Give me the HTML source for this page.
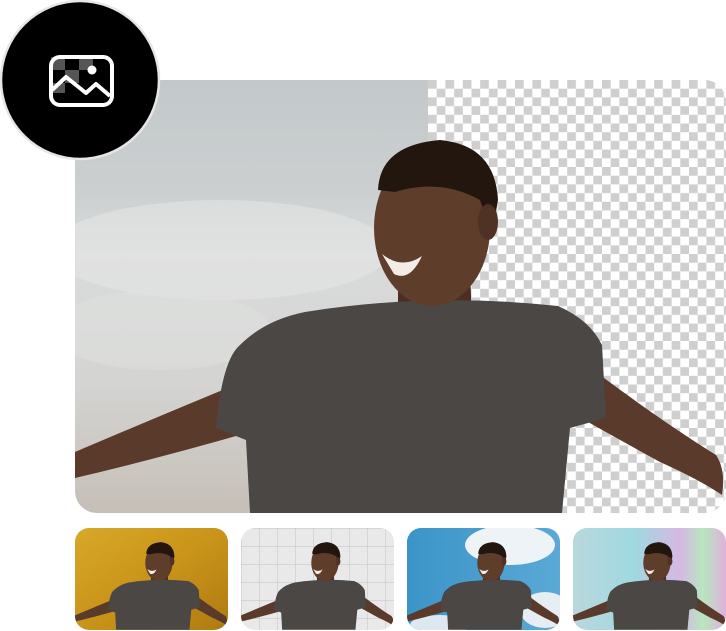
<!DOCTYPE html>
<html><head><style>
html,body{margin:0;padding:0;background:#fff;width:726px;height:631px;overflow:hidden}
svg{display:block}
</style></head><body>
<svg width="726" height="631" viewBox="0 0 726 631" xmlns="http://www.w3.org/2000/svg">
<defs>
<pattern id="chk" x="428" y="80" width="17.4" height="17.4" patternUnits="userSpaceOnUse">
<rect width="17.4" height="17.4" fill="#fff"/>
<rect width="8.7" height="8.7" fill="#cfcfcf"/>
<rect x="8.7" y="8.7" width="8.7" height="8.7" fill="#cfcfcf"/>
</pattern>
<linearGradient id="bg" x1="0" y1="0" x2="0" y2="1">
<stop offset="0" stop-color="#c3c8ca"/>
<stop offset="0.25" stop-color="#cbcfd0"/>
<stop offset="0.4" stop-color="#d9dbdb"/>
<stop offset="0.7" stop-color="#d4d4d2"/>
<stop offset="1" stop-color="#c6bfb7"/>
</linearGradient>
<linearGradient id="gold" x1="0" y1="0" x2="1" y2="1">
<stop offset="0" stop-color="#d8a829"/><stop offset="0.5" stop-color="#c99419"/><stop offset="1" stop-color="#b07a12"/>
</linearGradient>
<linearGradient id="sky" x1="0" y1="0" x2="1" y2="0">
<stop offset="0" stop-color="#3b94c8"/><stop offset="1" stop-color="#5aa9d6"/>
</linearGradient>
<linearGradient id="holo" x1="0" y1="0" x2="1" y2="0">
<stop offset="0" stop-color="#b9d8dc"/><stop offset="0.4" stop-color="#9fd9e0"/><stop offset="0.7" stop-color="#d6b8e4"/><stop offset="0.85" stop-color="#b8e6c0"/><stop offset="1" stop-color="#e0b0dc"/>
</linearGradient>
<pattern id="grid" x="241" y="528" width="18" height="18" patternUnits="userSpaceOnUse">
<rect width="18" height="18" fill="#e9e9ea"/>
<path d="M0 0H18M0 0V18" stroke="#c9c9cb" stroke-width="1.2"/>
</pattern>
<g id="person">
<path d="M75 452 Q150 420 242 382 L250 432 Q160 458 75 478 Z" fill="#5a3a2a"/>
<path d="M596 372 Q660 420 716 455 Q726 470 722 495 Q700 480 660 462 Q620 440 588 422 Z" fill="#5a3a2a"/>
<path d="M398 270 L470 270 L472 320 L398 320 Z" fill="#4a2f22"/>
<path d="M305 312 Q430 292 558 306 Q590 320 602 345 L606 418 L570 428 L562 513 L250 513 L246 440 L216 428 Q222 360 240 345 Q265 320 305 312 Z" fill="#4a4744"/>
<ellipse cx="432" cy="228" rx="58" ry="78" fill="#5e3d2b"/>
<path d="M378 190 Q380 145 440 140 Q495 145 498 200 L492 235 L480 200 Q440 178 395 192 Z" fill="#22160f"/>
<ellipse cx="488" cy="222" rx="10" ry="18" fill="#4f3224"/>
<path d="M382 254 Q402 270 422 256 Q410 282 394 274 Z" fill="#f2ece6"/>
</g>
<clipPath id="main"><rect x="75" y="80" width="651" height="433" rx="22"/></clipPath>
<clipPath id="t1"><rect x="75" y="528" width="153" height="102" rx="14"/></clipPath>
<clipPath id="t2"><rect x="241" y="528" width="153" height="102" rx="14"/></clipPath>
<clipPath id="t3"><rect x="407" y="528" width="153" height="102" rx="14"/></clipPath>
<clipPath id="t4"><rect x="573" y="528" width="153" height="102" rx="14"/></clipPath>
</defs>

<g clip-path="url(#main)">
<rect x="75" y="80" width="651" height="433" fill="url(#bg)"/>
<rect x="428" y="80" width="298" height="433" fill="url(#chk)"/>
<ellipse cx="220" cy="250" rx="170" ry="50" fill="#e4e5e5" opacity="0.6"/>
<ellipse cx="160" cy="330" rx="110" ry="40" fill="#e0e1e0" opacity="0.5"/>
<use href="#person"/>
</g>

<g clip-path="url(#t1)">
<rect x="75" y="528" width="153" height="102" fill="url(#gold)"/>
<g transform="translate(75 528) scale(0.235) translate(-75 -80)"><use href="#person"/></g>
</g>
<g clip-path="url(#t2)">
<rect x="241" y="528" width="153" height="102" fill="url(#grid)"/>
<g transform="translate(241 528) scale(0.235) translate(-75 -80)"><use href="#person"/></g>
</g>
<g clip-path="url(#t3)">
<rect x="407" y="528" width="153" height="102" fill="url(#sky)"/>
<ellipse cx="510" cy="545" rx="45" ry="20" fill="#eef3f7"/>
<ellipse cx="545" cy="610" rx="25" ry="18" fill="#e6eef4"/>
<ellipse cx="440" cy="625" rx="30" ry="10" fill="#dde8f0"/>
<g transform="translate(407 528) scale(0.235) translate(-75 -80)"><use href="#person"/></g>
</g>
<g clip-path="url(#t4)">
<rect x="573" y="528" width="153" height="102" fill="url(#holo)"/>
<g transform="translate(573 528) scale(0.235) translate(-75 -80)"><use href="#person"/></g>
</g>

<circle cx="80" cy="80" r="79" fill="#000" stroke="#e6e6e6" stroke-width="2.5"/>
<g>
<rect x="51" y="57" width="14" height="13" fill="#555"/>
<rect x="79" y="57" width="14" height="13" fill="#555"/>
<rect x="65" y="70" width="14" height="13" fill="#555"/>
<rect x="51" y="83" width="14" height="10" fill="#555"/>
<rect x="51" y="57" width="61" height="48" rx="9" fill="none" stroke="#fff" stroke-width="4"/>
<path d="M52 90 L66 77 L86 93 L96 84 L110 96" fill="none" stroke="#fff" stroke-width="4" stroke-linejoin="round"/>
<circle cx="92" cy="70" r="4.5" fill="#fff"/>
</g>
</svg>
</body></html>
